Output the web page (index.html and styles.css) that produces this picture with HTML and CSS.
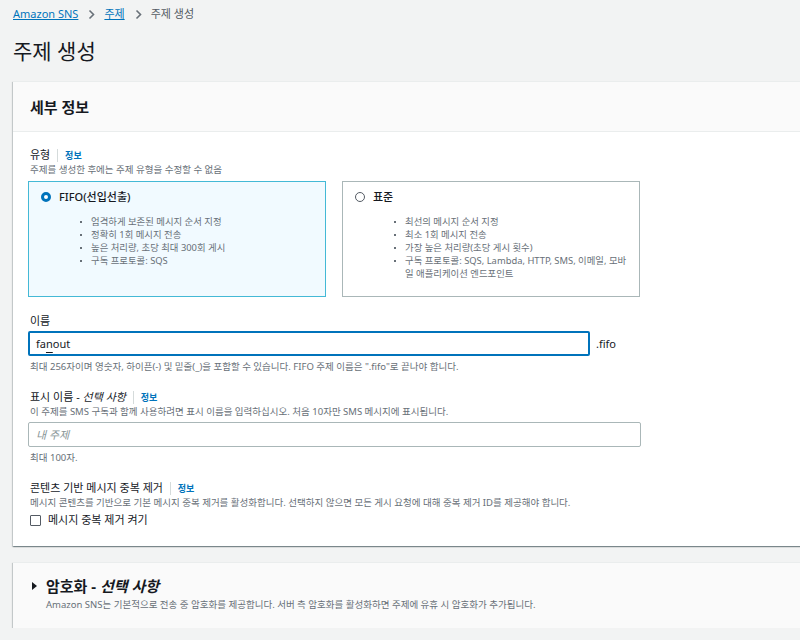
FILE: index.html
```html
<!DOCTYPE html>
<html lang="ko">
<head>
    <meta charset="UTF-8">
    <title>주제 생성</title>
    <link rel="stylesheet" href="styles.css">
</head>
<body>
    <div class="page">
        <nav class="breadcrumb">
            <a href="#">Amazon SNS</a>
            <svg class="sep" width="7" height="11" viewBox="0 0 7 11"><polyline points="1.5,1.5 5.5,5.5 1.5,9.5" fill="none" stroke="#687078" stroke-width="1.6"/></svg>
            <a href="#">주제</a>
            <svg class="sep" width="7" height="11" viewBox="0 0 7 11"><polyline points="1.5,1.5 5.5,5.5 1.5,9.5" fill="none" stroke="#687078" stroke-width="1.6"/></svg>
            <span class="current">주제 생성</span>
        </nav>

        <h1>주제 생성</h1>

        <div class="panel">
            <div class="panel-header">
                <h2>세부 정보</h2>
            </div>
            <div class="panel-body">
                <div class="field type-field">
                    <div class="label">유형 <span class="info">정보</span></div>
                    <div class="desc">주제를 생성한 후에는 주제 유형을 수정할 수 없음</div>
                    <div class="tiles">
                        <div class="tile selected">
                            <div class="tile-title"><span class="radio checked"></span>FIFO(선입선출)</div>
                            <ul>
                                <li>엄격하게 보존된 메시지 순서 지정</li>
                                <li>정확히 1회 메시지 전송</li>
                                <li>높은 처리량, 초당 최대 300회 게시</li>
                                <li>구독 프로토콜: SQS</li>
                            </ul>
                        </div>
                        <div class="tile">
                            <div class="tile-title"><span class="radio"></span>표준</div>
                            <ul>
                                <li>최선의 메시지 순서 지정</li>
                                <li>최소 1회 메시지 전송</li>
                                <li>가장 높은 처리량(초당 게시 횟수)</li>
                                <li>구독 프로토콜: SQS, Lambda, HTTP, SMS, 이메일, 모바일 애플리케이션 엔드포인트</li>
                            </ul>
                        </div>
                    </div>
                </div>

                <div class="field">
                    <div class="label">이름</div>
                    <div class="input-row">
                        <div class="input focused">fa<span class="ime">n</span>out</div>
                        <span class="suffix">.fifo</span>
                    </div>
                    <div class="hint">최대 256자이며 영숫자, 하이픈(-) 및 밑줄(_)을 포함할 수 있습니다. FIFO 주제 이름은 ".fifo"로 끝나야 합니다.</div>
                </div>

                <div class="field">
                    <div class="label">표시 이름 - <i>선택 사항</i> <span class="info">정보</span></div>
                    <div class="desc">이 주제를 SMS 구독과 함께 사용하려면 표시 이름을 입력하십시오. 처음 10자만 SMS 메시지에 표시됩니다.</div>
                    <div class="input wide placeholder">내 주제</div>
                    <div class="hint">최대 100자.</div>
                </div>

                <div class="field last">
                    <div class="label">콘텐츠 기반 메시지 중복 제거 <span class="info">정보</span></div>
                    <div class="desc">메시지 콘텐츠를 기반으로 기본 메시지 중복 제거를 활성화합니다. 선택하지 않으면 모든 게시 요청에 대해 중복 제거 ID를 제공해야 합니다.</div>
                    <label class="check"><span class="box"></span>메시지 중복 제거 켜기</label>
                </div>
            </div>
        </div>

        <div class="panel collapsed">
            <h2><span class="caret"></span><span>암호화 - <i>선택 사항</i></span></h2>
            <div class="desc">Amazon SNS는 기본적으로 전송 중 암호화를 제공합니다. 서버 측 암호화를 활성화하면 주제에 유휴 시 암호화가 추가됩니다.</div>
        </div>
    </div>
</body>
</html>
```

FILE: styles.css
```css
body {
    margin: 0;
    background-color: #f2f3f3;
    font-family: "Noto Sans", "Noto Sans CJK KR", sans-serif;
    color: #16191f;
    overflow: hidden;
}
.page {
    padding: 6px 0 0 13px;
    width: 820px;
}
a {
    color: #0073bb;
}
.breadcrumb {
    display: flex;
    align-items: center;
    font-size: 11px;
    line-height: 16px;
    color: #545b64;
}
.breadcrumb a {
    text-decoration: underline;
}
.breadcrumb .sep {
    margin: 0 9px 0 10px;
}
h1 {
    font-size: 21px;
    font-weight: 400;
    line-height: 30px;
    margin: 14px 0 15px;
}
.panel {
    background-color: white;
    box-shadow: 0 1px 1px 0 rgba(0,28,36,0.3), 1px 1px 1px 0 rgba(0,28,36,0.15), -1px 1px 1px 0 rgba(0,28,36,0.15);
    border-top: 1px solid #eaeded;
}
.panel-header {
    background-color: #fafafa;
    border-bottom: 1px solid #eaeded;
    height: 49px;
    padding: 0 17px;
    display: flex;
    align-items: center;
}
h2 {
    margin: 0;
    font-size: 15px;
    font-weight: 700;
    line-height: 20px;
}
.panel-body {
    padding: 15px 15px 18px;
}
.field {
    margin-bottom: 15px;
}
.field.type-field {
    margin-bottom: 16px;
}
.field.last {
    margin-bottom: 0;
}
.label {
    font-size: 11px;
    line-height: 15px;
    padding-left: 2px;
}
.label i {
    font-style: italic;
}
.info {
    color: #0073bb;
    font-weight: 700;
    font-size: 9px;
    border-left: 1px solid #d5dbdb;
    padding-left: 7px;
    margin-left: 4px;
}
.desc, .hint {
    font-size: 9.5px;
    line-height: 14px;
    color: #687078;
    padding-left: 2px;
}
.hint {
    margin-top: 4px;
}
.tiles {
    display: flex;
    gap: 16px;
    margin-top: 4px;
}
.tile {
    width: 296px;
    height: 114px;
    border: 1px solid #aab7b8;
}
.tile.selected {
    background-color: #f1faff;
    border-color: #44b9d6;
}
.tile-title {
    display: flex;
    align-items: center;
    font-size: 11px;
    font-weight: 500;
    line-height: 16px;
    padding: 7px 0 0 12px;
}
.radio {
    width: 8px;
    height: 8px;
    border: 1px solid #545b64;
    border-radius: 50%;
    margin-right: 8px;
    background-color: white;
}
.radio.checked {
    border: 3px solid #0073bb;
    width: 4px;
    height: 4px;
}
.tile ul {
    margin: 10px 0 0;
    padding: 0 10px 0 62px;
    font-size: 9.4px;
    line-height: 13px;
    color: #687078;
    list-style: none;
}
.tile li {
    position: relative;
}
.tile li::before {
    content: "";
    position: absolute;
    left: -11px;
    top: 6px;
    width: 2px;
    height: 2px;
    background-color: #687078;
}
.input-row {
    display: flex;
    align-items: center;
    margin-top: 3px;
}
.input {
    box-sizing: border-box;
    height: 25px;
    border: 1px solid #aab7b8;
    border-radius: 2px;
    font-size: 11px;
    line-height: 23px;
    padding: 0 7px;
}
.input.focused {
    width: 562px;
    border: 2px solid #0073bb;
    line-height: 21px;
    padding: 0 6px;
}
.ime {
    text-decoration: underline;
    text-underline-offset: 4px;
}
.input.wide {
    width: 613px;
    margin-top: 3px;
}
.input.placeholder {
    color: #879596;
    font-style: italic;
}
.suffix {
    font-size: 11px;
    margin-left: 6px;
}
.check {
    display: flex;
    align-items: center;
    font-size: 11px;
    line-height: 16px;
    margin-top: 2px;
    padding-left: 2px;
}
.check .box {
    width: 9px;
    height: 9px;
    border: 1px solid #545b64;
    border-radius: 1px;
    background-color: white;
    margin-right: 7px;
}
.panel.collapsed {
    margin-top: 16px;
    background-color: #fafafa;
    padding: 13px 17px 16px;
}
.panel.collapsed h2 {
    display: flex;
    align-items: center;
}
.caret {
    width: 0;
    height: 0;
    border-left: 5px solid #16191f;
    border-top: 4px solid transparent;
    border-bottom: 4px solid transparent;
    margin-right: 9px;
    margin-left: 2px;
}
.panel.collapsed .desc {
    padding-left: 16px;
    margin-top: 2px;
}
```
